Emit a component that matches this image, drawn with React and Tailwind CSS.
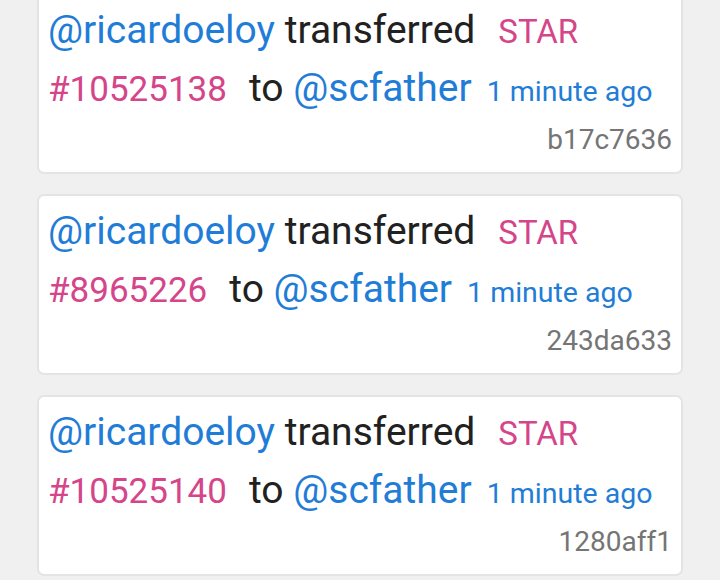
const transfers = [
  { token: '#10525138', hash: 'b17c7636' },
  { token: '#8965226', hash: '243da633' },
  { token: '#10525140', hash: '1280aff1' },
]

function TransferCard({ token, hash }) {
  return (
    <div className="bg-white border-2 border-[#e4e4e4] rounded-[7px] h-[181px] pl-[9px] pr-[9px] pt-[7px] text-[39px] leading-[57px] text-[#212121]">
      <div className="whitespace-nowrap">
        <span className="text-[#1f7dd7]">@ricardoeloy</span> transferred
        <span className="ml-[23px] text-[33px] text-[#d4458a]">STAR</span>
      </div>
      <div className="whitespace-nowrap">
        <span className="text-[35px] text-[#d4458a]">{token}</span>
        <span className="ml-[22px]">to</span>{' '}
        <span className="text-[#1f7dd7]">@scfather</span>
        <span className="ml-[15px] text-[28.5px] text-[#1f7dd7]">1 minute ago</span>
      </div>
      <div className="text-right text-[28px] leading-[40px] text-[#757575]">{hash}</div>
    </div>
  )
}

export default function App() {
  return (
    <div className="w-[720px] h-[580px] overflow-hidden bg-[#f0f0f0] font-['Roboto',sans-serif]">
      <div className="px-[37px] -mt-[7px] flex flex-col gap-[20px]">
        {transfers.map((t) => (
          <TransferCard key={t.hash} {...t} />
        ))}
      </div>
    </div>
  )
}
